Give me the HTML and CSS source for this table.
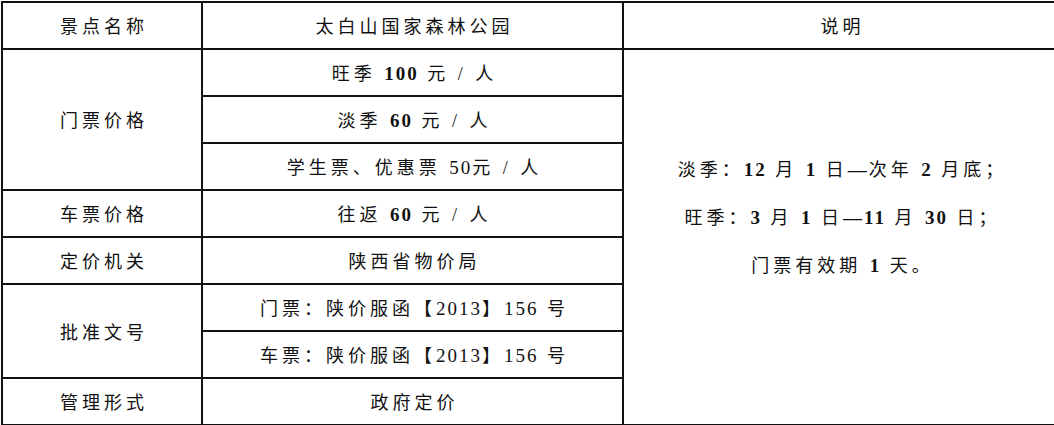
FILE: index.html
```html
<!DOCTYPE html>
<html lang="zh-CN">
<head>
<meta charset="utf-8">
<title>太白山国家森林公园</title>
<link rel="stylesheet" href="styles.css">
</head>
<body>
<div class="wrap">
<table class="price">
  <colgroup>
    <col class="c1">
    <col class="c2">
    <col class="c3">
  </colgroup>
  <tr>
    <td>景点名称</td>
    <td>太白山国家森林公园</td>
    <td>说明</td>
  </tr>
  <tr>
    <td rowspan="3">门票价格</td>
    <td>旺季 <b class="n">100</b> 元 / 人</td>
    <td rowspan="8" class="note">
      <div class="note-in">
        <p>淡季：<b class="n">12</b> 月 <b class="n">1</b> 日<b class="n">—</b>次年 <b class="n">2</b> 月底；</p>
        <p>旺季：<b class="n">3</b> 月 <b class="n">1</b> 日<b class="n">—11</b> 月 <b class="n">30</b> 日；</p>
        <p>门票有效期 <b class="n">1</b> 天。</p>
      </div>
    </td>
  </tr>
  <tr>
    <td>淡季 <b class="n">60</b> 元 / 人</td>
  </tr>
  <tr>
    <td>学生票、优惠票 <span class="n">50</span>元 / 人</td>
  </tr>
  <tr>
    <td>车票价格</td>
    <td>往返 <b class="n">60</b> 元 / 人</td>
  </tr>
  <tr>
    <td>定价机关</td>
    <td>陕西省物价局</td>
  </tr>
  <tr>
    <td rowspan="2">批准文号</td>
    <td>门票：陕价服函【<span class="n">2013</span>】<span class="n">156</span> 号</td>
  </tr>
  <tr>
    <td>车票：陕价服函【<span class="n">2013</span>】<span class="n">156</span> 号</td>
  </tr>
  <tr>
    <td>管理形式</td>
    <td>政府定价</td>
  </tr>
</table>
</div>
</body>
</html>
```
FILE: styles.css
```css
html, body {
  margin: 0;
  padding: 0;
  background: #ffffff;
  overflow: hidden;
}
.wrap {
  padding: 1px 0 0 1px;
  width: 1060px;
}
.price {
  border-collapse: collapse;
  width: 1056px;
  table-layout: fixed;
  font-family: "Liberation Serif", "Noto Sans CJK SC", serif;
  font-size: 18px;
  color: #111111;
}
.c1 { width: 200px; }
.c2 { width: 421px; }
.c3 { width: 435px; }
.price tr { height: 47px; }
.price td {
  border: 2px solid #111111;
  padding: 3px 0 0 4px;
  text-align: center;
  vertical-align: middle;
  letter-spacing: 4px;
  line-height: 20px;
  white-space: nowrap;
}
.price b {
  font-weight: bold;
}
.price .n {
  letter-spacing: 2px;
  font-size: 19px;
}
.note-in {
  padding-bottom: 42px;
}
.note-in p {
  margin: 0;
  line-height: 47px;
}
```
